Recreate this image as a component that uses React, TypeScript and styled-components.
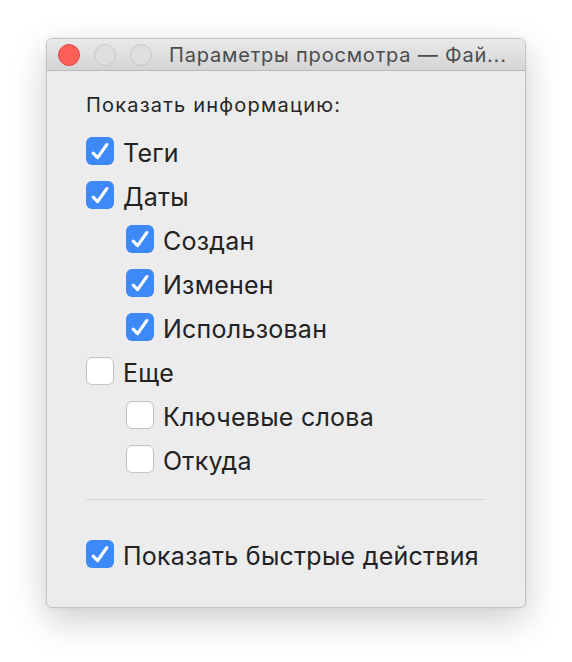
import styled, { createGlobalStyle } from "styled-components"

const GlobalStyle = createGlobalStyle`
    html, body {
        margin: 0;
        padding: 0;
        background: #ffffff;
    }
    body {
        font-family: Inter, "Noto Sans", "Liberation Sans", sans-serif;
        -webkit-font-smoothing: antialiased;
    }
`

type Item = { label: string; checked: boolean; level: number }

const items: Item[] = [
    { label: "Теги", checked: true, level: 0 },
    { label: "Даты", checked: true, level: 0 },
    { label: "Создан", checked: true, level: 1 },
    { label: "Изменен", checked: true, level: 1 },
    { label: "Использован", checked: true, level: 1 },
    { label: "Еще", checked: false, level: 0 },
    { label: "Ключевые слова", checked: false, level: 1 },
    { label: "Откуда", checked: false, level: 1 },
]

const CheckBox = ({ checked }: { checked: boolean }) => (
    <Box $checked={checked}>
        {checked && (
            <svg width="28" height="28" viewBox="0 0 28 28">
                <path
                    d="M7.2 16.2 L11.6 20.6 L20.8 7.6"
                    fill="none"
                    stroke="#fff"
                    strokeWidth="3.2"
                    strokeLinecap="round"
                    strokeLinejoin="round"
                />
            </svg>
        )}
    </Box>
)

const App = () => {
    return (
        <>
            <GlobalStyle />
            <Page>
                <Window>
                    <TitleBar>
                        <Lights>
                            <Light $color="#fe5f57" $border="#e2463f" />
                            <Light $color="#dedede" $border="#c6c6c6" />
                            <Light $color="#dedede" $border="#c6c6c6" />
                        </Lights>
                        <Title>Параметры просмотра — Фай...</Title>
                    </TitleBar>
                    <Body>
                        <Heading>Показать информацию:</Heading>
                        <List>
                            {items.map((it) => (
                                <Row key={it.label} $level={it.level}>
                                    <CheckBox checked={it.checked} />
                                    <Label>{it.label}</Label>
                                </Row>
                            ))}
                        </List>
                        <Separator />
                        <Row $level={0} $top={32}>
                            <CheckBox checked />
                            <Label>Показать быстрые действия</Label>
                        </Row>
                    </Body>
                </Window>
            </Page>
        </>
    )
}

const Page = styled.div`
    width: 572px;
    height: 662px;
    box-sizing: border-box;
    padding: 38px 0 0 46px;
`

const Window = styled.div`
    width: 480px;
    height: 570px;
    box-sizing: border-box;
    background: #ececec;
    border: 1px solid #c4c4c4;
    border-radius: 6px;
    overflow: hidden;
    box-shadow: 0 12px 36px rgba(0, 0, 0, 0.2), 0 0 4px rgba(0, 0, 0, 0.06);
    display: flex;
    flex-direction: column;
`

const TitleBar = styled.div`
    height: 31px;
    flex-shrink: 0;
    display: flex;
    align-items: center;
    background: linear-gradient(#e9e9e9, #d4d4d4);
    border-bottom: 1px solid #b9b9b9;
    padding-left: 11px;
`

const Lights = styled.div`
    display: flex;
    gap: 14px;
`

const Light = styled.span<{ $color: string; $border: string }>`
    width: 20px;
    height: 20px;
    border-radius: 50%;
    background: ${(p) => p.$color};
    border: 1px solid ${(p) => p.$border};
`

const Title = styled.div`
    margin-left: 17px;
    font-size: 20px;
    letter-spacing: 0.8px;
    color: #4c4c4c;
    white-space: nowrap;
`

const Body = styled.div`
    padding: 21px 0 0 39px;
    display: flex;
    flex-direction: column;
`

const Heading = styled.div`
    font-size: 20px;
    letter-spacing: 1.2px;
    line-height: 26px;
    color: #262626;
    margin-bottom: 11px;
`

const List = styled.div`
    display: flex;
    flex-direction: column;
`

const Row = styled.div<{ $level: number; $top?: number }>`
    height: 44px;
    display: flex;
    align-items: center;
    padding-left: ${(p) => p.$level * 40}px;
    margin-top: ${(p) => p.$top ?? 0}px;
`

const Box = styled.span<{ $checked: boolean }>`
    width: 28px;
    height: 28px;
    box-sizing: border-box;
    border-radius: 6px;
    flex-shrink: 0;
    display: flex;
    background: ${(p) => (p.$checked ? "#3c89f7" : "#ffffff")};
    border: ${(p) => (p.$checked ? "none" : "1px solid #c3c3c3")};
    box-shadow: ${(p) => (p.$checked ? "none" : "inset 0 1px 1px rgba(0,0,0,0.04)")};
`

const Label = styled.span`
    margin-left: 9px;
    padding-top: 3px;
    font-size: 25px;
    letter-spacing: 0.25px;
    color: #222222;
    white-space: nowrap;
`

const Separator = styled.div`
    height: 1px;
    width: 400px;
    background: #d5d5d5;
    margin-top: 18px;
`

export default App
